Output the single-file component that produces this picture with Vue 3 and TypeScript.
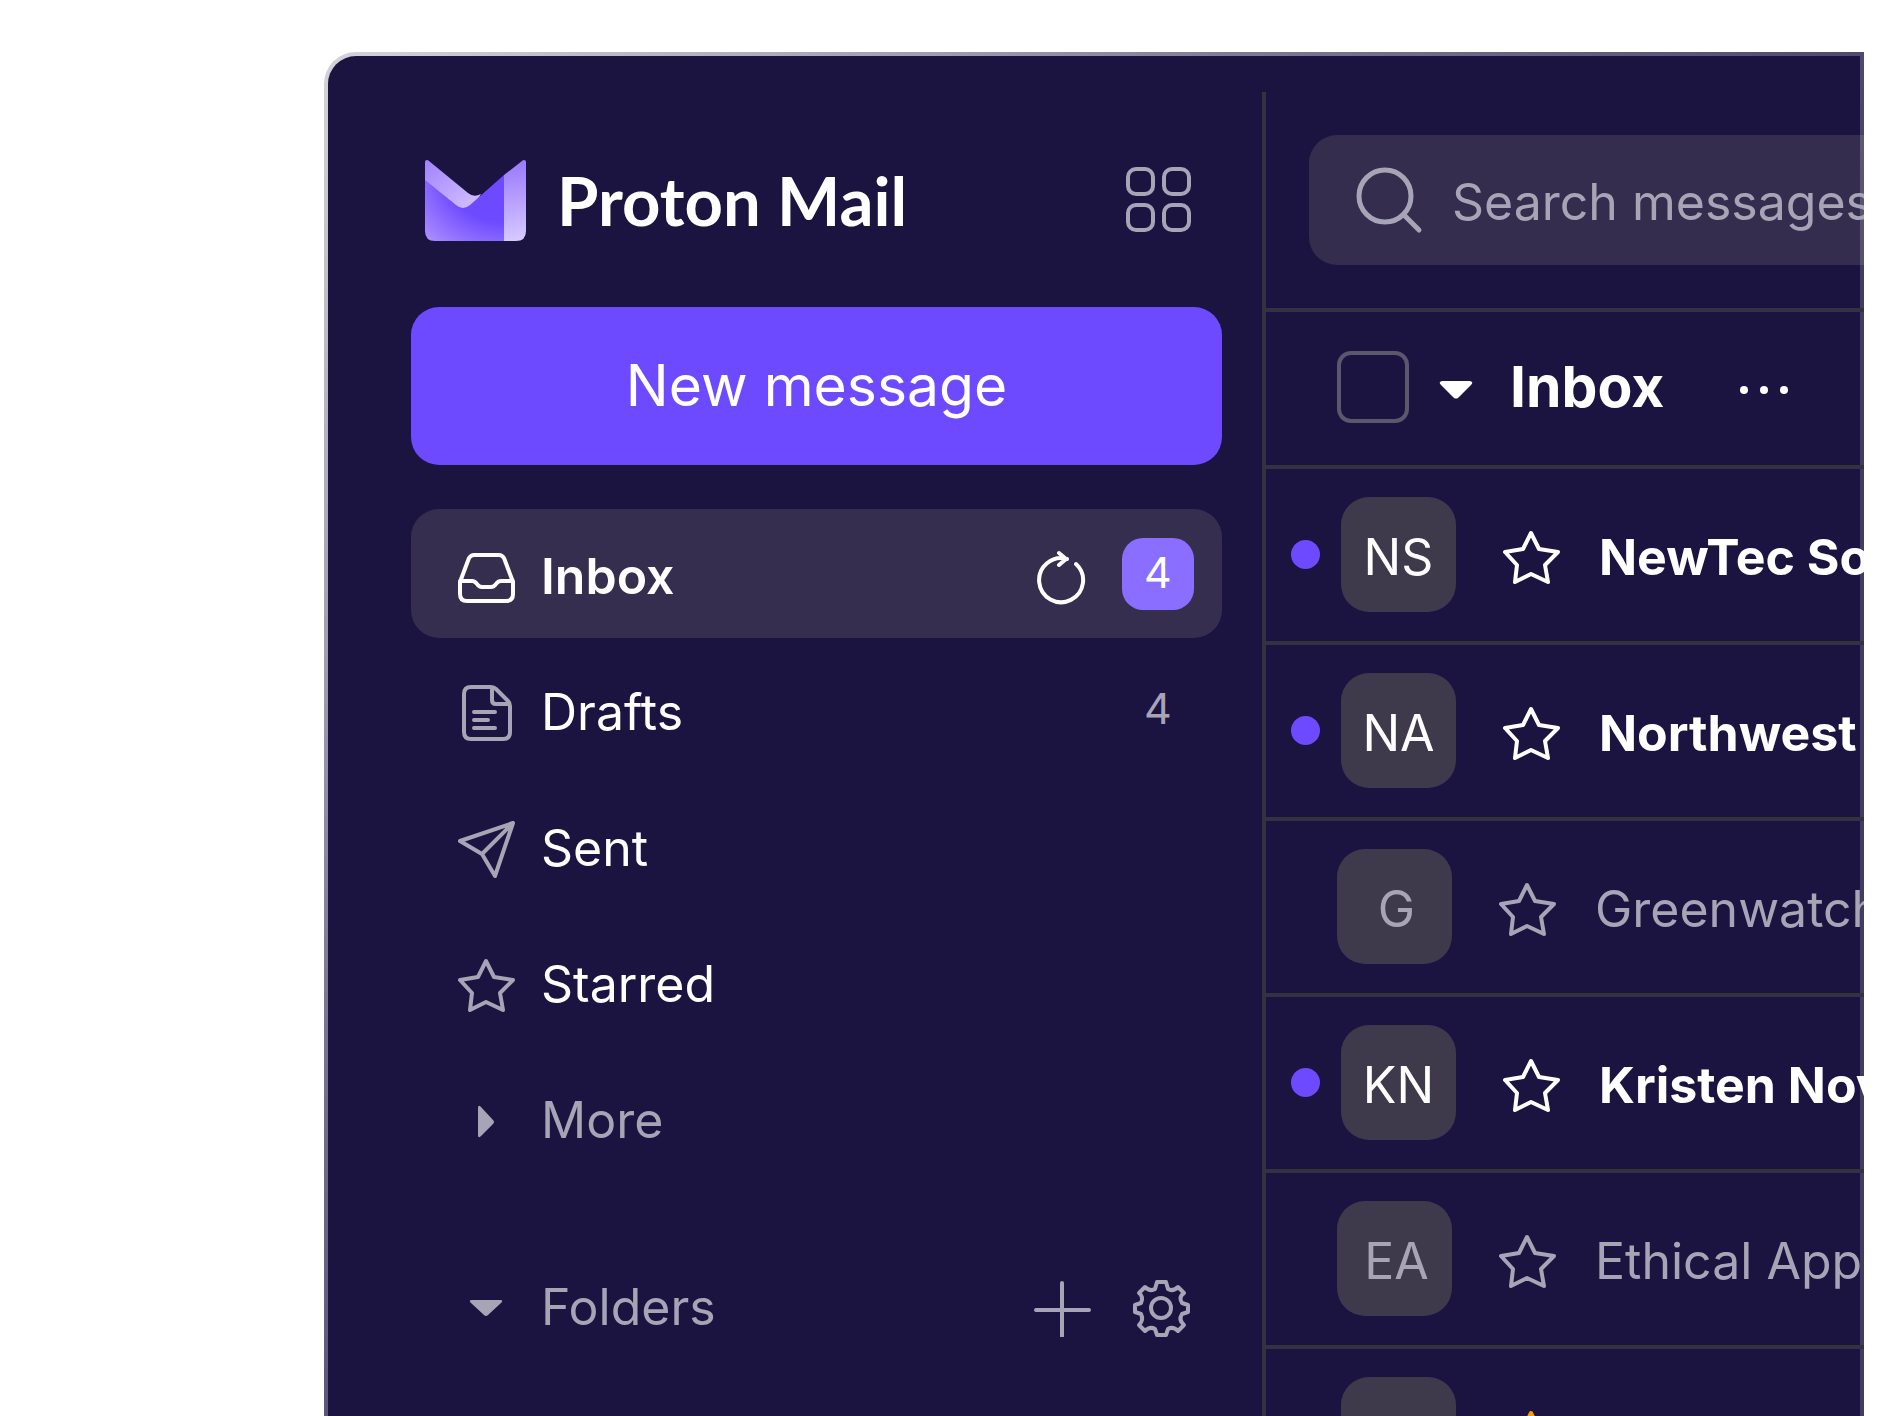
<script setup lang="ts">
interface Folder {
  name: string
  icon: 'inbox' | 'drafts' | 'sent' | 'star' | 'more'
  count?: number
  active?: boolean
  muted?: boolean
}

interface Mail {
  id: number
  initials: string
  sender: string
  unread: boolean
  starred?: boolean
}

const folders: Folder[] = [
  { name: 'Inbox', icon: 'inbox', count: 4, active: true },
  { name: 'Drafts', icon: 'drafts', count: 4 },
  { name: 'Sent', icon: 'sent' },
  { name: 'Starred', icon: 'star' },
  { name: 'More', icon: 'more', muted: true },
]

const mails: Mail[] = [
  { id: 1, initials: 'NS', sender: 'NewTec So', unread: true },
  { id: 2, initials: 'NA', sender: 'Northwest', unread: true },
  { id: 3, initials: 'G', sender: 'Greenwatch', unread: false },
  { id: 4, initials: 'KN', sender: 'Kristen Nov', unread: true },
  { id: 5, initials: 'EA', sender: 'Ethical App', unread: false },
  { id: 6, initials: '', sender: '', unread: true, starred: true },
]
</script>

<template>
  <div class="page">
    <div class="window">
      <aside class="sidebar">
        <header class="brand">
          <svg class="logo" viewBox="0 0 101 81" aria-hidden="true">
            <defs>
              <linearGradient id="flap" x1="0" y1="0" x2="50" y2="56" gradientUnits="userSpaceOnUse">
                <stop offset="0" stop-color="#a280ff" />
                <stop offset="1" stop-color="#d5c6ff" />
              </linearGradient>
              <radialGradient id="body" cx="0" cy="0" r="1" gradientUnits="userSpaceOnUse" gradientTransform="translate(78 8) scale(106 98)">
                <stop offset="0.55" stop-color="#6d4aff" />
                <stop offset="1" stop-color="#a98bff" />
              </radialGradient>
              <linearGradient id="side" x1="86" y1="5" x2="98" y2="81" gradientUnits="userSpaceOnUse">
                <stop offset="0" stop-color="#9c7cff" />
                <stop offset="1" stop-color="#d8caff" />
              </linearGradient>
            </defs>
            <path fill="url(#flap)" d="M0 2Q0 0 2 0Q3 0 4 1L43 33Q49 38 56 34L46 50H32L0 24Z" />
            <path fill="url(#body)" d="M0 20L31 45Q38 51 45 45L79 15V81H10Q0 81 0 71Z" />
            <path fill="url(#side)" d="M79 15L97 1Q98 0 99 0Q101 0 101 2V71Q101 81 91 81H79Z" />
          </svg>
          <span class="wordmark">Proton Mail</span>
          <button class="icon-button apps" aria-label="Apps">
            <svg viewBox="0 0 66 66" fill="none" stroke="currentColor" stroke-width="4">
              <rect x="2" y="2" width="25" height="25" rx="8" />
              <rect x="38" y="2" width="25" height="25" rx="8" />
              <rect x="2" y="38" width="25" height="25" rx="8" />
              <rect x="38" y="38" width="25" height="25" rx="8" />
            </svg>
          </button>
        </header>

        <button class="compose">New message</button>

        <nav class="folders" aria-label="Mailboxes">
          <a
            v-for="folder in folders"
            :key="folder.name"
            href="#"
            class="folder"
            :class="{ active: folder.active, muted: folder.muted }"
          >
            <svg v-if="folder.icon === 'inbox'" class="icon" viewBox="0 0 57 57" aria-hidden="true">
              <path d="M2 33L11 9Q13 6 16 6H41Q44 6 46 9L55 33V45Q55 52 48 52H9Q2 52 2 45ZM2 32H14Q17 32 19 35Q21 38 24 38H33Q36 38 38 35Q40 32 43 32H55" />
            </svg>
            <svg v-else-if="folder.icon === 'drafts'" class="icon" viewBox="0 0 57 57" aria-hidden="true">
              <path d="M13 2H33Q36 2 38 4L50 16Q52 18 52 21V47Q52 54 45 54H13Q6 54 6 47V9Q6 2 13 2ZM34 3V15Q34 19 38 19H51M16 27H37M16 35H30M16 43H37" />
            </svg>
            <svg v-else-if="folder.icon === 'sent'" class="icon" viewBox="0 0 57 57" aria-hidden="true">
              <path d="M2 20L55 2L37 55L24 33ZM24 33L54 3" />
            </svg>
            <svg v-else-if="folder.icon === 'star'" class="icon" viewBox="0 0 57 57" aria-hidden="true">
              <path d="M28 4L36 20L55 23L42 36L45 53L28 45L12 53L14 36L2 23L20 20Z" />
            </svg>
            <svg v-else class="icon solid" viewBox="0 0 57 57" aria-hidden="true">
              <path d="M20 15Q20 11 23 14L35 27Q37 29 35 31L23 43Q20 46 20 42Z" />
            </svg>
            <span class="folder-name">{{ folder.name }}</span>
            <svg v-if="folder.active" class="refresh" viewBox="0 0 57 57" aria-hidden="true">
              <path d="M43 15A22 22 0 1 1 34 10M26 4L33 10L26 16" />
            </svg>
            <span v-if="folder.count" class="count">{{ folder.count }}</span>
          </a>
        </nav>

        <div class="section">
          <svg class="icon solid" viewBox="0 0 57 57" aria-hidden="true">
            <path d="M14 20Q10 20 13 23L26 35Q28 37 30 35L43 23Q46 20 42 20Z" />
          </svg>
          <span class="folder-name">Folders</span>
          <button class="icon-button" aria-label="Add folder">
            <svg class="icon" viewBox="0 0 57 57"><path d="M28 3V56M2 30H55" /></svg>
          </button>
          <button class="icon-button" aria-label="Folder settings">
            <svg class="icon" viewBox="0 0 57 57">
              <circle cx="28" cy="28" r="10" />
              <path d="M24 2H33L35 9Q40 12 45 7L51 13Q45 17 49 23L55 25V32L49 34Q45 40 51 45L45 51Q40 46 35 49L33 55H24L22 49Q17 46 12 51L6 45Q11 40 8 34L2 32V25L8 23Q11 17 6 13L12 7Q17 12 22 9Z" />
            </svg>
          </button>
        </div>
      </aside>

      <main class="content">
        <div class="search-bar">
          <label class="search">
            <svg viewBox="0 0 68 68" fill="none" stroke="currentColor" stroke-width="5" stroke-linecap="round" aria-hidden="true">
              <circle cx="29" cy="30" r="26" />
              <path d="M48 49L63 64" />
            </svg>
            <input type="search" placeholder="Search messages" aria-label="Search messages" />
          </label>
        </div>

        <div class="toolbar">
          <input type="checkbox" class="select-all" aria-label="Select all" />
          <button class="icon-button caret" aria-label="Selection options">
            <svg viewBox="0 0 34 18"><path fill="currentColor" d="M3 0H31Q35 1 32 4L19 17Q17 18 15 17L2 4Q-1 1 3 0Z" /></svg>
          </button>
          <h1>Inbox</h1>
          <button class="icon-button dots" aria-label="More actions">
            <svg viewBox="0 0 50 10" fill="currentColor">
              <circle cx="5" cy="5" r="4" /><circle cx="25" cy="5" r="4" /><circle cx="45" cy="5" r="4" />
            </svg>
          </button>
        </div>

        <ul class="mails">
          <li v-for="mail in mails" :key="mail.id" class="mail" :class="{ unread: mail.unread }">
            <span v-if="mail.unread" class="dot"></span>
            <span class="avatar">{{ mail.initials }}</span>
            <svg class="icon" :class="{ starred: mail.starred }" viewBox="0 0 57 57" aria-hidden="true">
              <path d="M28 4L36 20L55 23L42 36L45 53L28 45L12 53L14 36L2 23L20 20Z" />
            </svg>
            <span class="sender">{{ mail.sender }}</span>
          </li>
        </ul>
      </main>
    </div>
  </div>
</template>

<style>
body {
  background: #fff;
}
</style>

<style scoped>
* {
  box-sizing: border-box;
}
.page {
  height: 100vh;
  overflow: hidden;
  padding: 52px 19px 0 324px;
  font-family: Inter, 'Liberation Sans', sans-serif;
  font-size: 50px;
  line-height: 60px;
  color: #fff;
}
.window {
  display: flex;
  height: 100%;
  padding-top: 36px;
  border: 4px solid transparent;
  border-bottom: 0;
  border-radius: 32px 0 0 0;
  background:
    linear-gradient(#1b1340, #1b1340) padding-box,
    linear-gradient(135deg, #d4d3dc, #a09cb1 21%, #777390 34%, #564f75 50%, #433c62 60%) border-box;
}
button {
  font: inherit;
  color: inherit;
  border: 0;
  padding: 0;
  background: none;
}
svg {
  display: block;
  flex: none;
}
.icon,
.refresh {
  width: 57px;
  height: 57px;
  fill: none;
  stroke: currentColor;
  stroke-width: 4px;
  stroke-linecap: round;
  stroke-linejoin: round;
}
.icon.solid {
  fill: currentColor;
  stroke: none;
}
.icon-button {
  color: #a7a4b5;
}

.sidebar {
  flex: none;
  width: 934px;
  padding: 60px 40px 0 83px;
}
.brand {
  display: flex;
  align-items: center;
  height: 100px;
  padding: 0 30px 4px 14px;
}
.logo {
  width: 101px;
  height: 81px;
}
.wordmark {
  margin-left: 31px;
  font-family: Lato, sans-serif;
  font-size: 67px;
  font-weight: 700;
  line-height: 80px;
}
.apps {
  margin-left: auto;
}
.apps svg {
  width: 66px;
  height: 66px;
}
.compose {
  display: block;
  width: 100%;
  height: 158px;
  margin-top: 55px;
  border-radius: 28px;
  background: #6d4aff;
  font-size: 57px;
}
.folders {
  display: flex;
  flex-direction: column;
  gap: 7px;
  margin-top: 44px;
}
.folder,
.section {
  display: flex;
  align-items: center;
  height: 129px;
  padding: 0 28px 0 47px;
  border-radius: 28px;
  color: #fff;
  text-decoration: none;
}
.folder .icon,
.refresh {
  margin-top: 8px;
}
.folder .icon,
.section > .icon {
  color: #a7a4b5;
}
.folder-name {
  flex: 1;
  margin-left: 26px;
  padding-top: 4px;
}
.folder.active {
  background: #352e4f;
  font-weight: 600;
}
.folder.active .icon {
  color: #fff;
}
.folder.muted,
.section {
  color: #a7a4b5;
}
.refresh {
  margin-right: 32px;
}
.count {
  width: 72px;
  height: 72px;
  border-radius: 21px;
  font-size: 43px;
  font-weight: 400;
  line-height: 68px;
  text-align: center;
  color: #a7a4b5;
}
.active .count {
  background: #8a6eff;
  color: #fff;
}
.section {
  margin-top: 58px;
  padding-right: 32px;
}
.section .icon {
  margin-top: 8px;
}
.section .icon-button + .icon-button {
  margin-left: 42px;
}

.content {
  flex: 1;
  min-width: 0;
  margin-right: -4px;
  overflow: hidden;
  border-left: 4px solid #343140;
}
.search-bar {
  height: 220px;
  padding: 43px 0 0 43px;
  border-bottom: 4px solid #343140;
}
.search {
  display: flex;
  align-items: center;
  height: 130px;
  padding-left: 47px;
  border-radius: 28px 0 0 28px;
  background: rgba(227, 227, 179, 0.13);
  color: #a7a4b5;
  overflow: hidden;
}
.search svg {
  width: 68px;
  height: 68px;
}
.search input {
  flex: none;
  width: 480px;
  margin-left: 28px;
  padding: 4px 0 0;
  border: 0;
  outline: 0;
  background: none;
  font: inherit;
  color: inherit;
}
.search input::placeholder {
  color: inherit;
  opacity: 1;
}
.toolbar {
  display: flex;
  align-items: center;
  height: 157px;
  padding: 0 0 4px 71px;
  border-bottom: 4px solid #343140;
}
.select-all {
  appearance: none;
  width: 72px;
  height: 72px;
  margin: 0;
  border: 4px solid #5c576d;
  border-radius: 14px;
}
.toolbar .icon-button {
  color: #fff;
}
.caret {
  margin: 6px 0 0 30px;
}
.caret svg {
  width: 34px;
  height: 18px;
}
h1 {
  margin: 0 0 0 37px;
  font-size: 57px;
  font-weight: 700;
}
.dots {
  margin: 6px 0 0 75px;
}
.dots svg {
  width: 50px;
  height: 10px;
}
.mails {
  margin: 0;
  padding: 0;
  list-style: none;
}
.mail {
  display: flex;
  align-items: center;
  height: 176px;
  padding: 0 0 2px 71px;
  border-bottom: 4px solid #343140;
  color: #a7a4b5;
  white-space: nowrap;
}
.mail.unread {
  padding-left: 25px;
  color: #fff;
}
.dot {
  flex: none;
  width: 29px;
  height: 29px;
  margin-right: 21px;
  border-radius: 50%;
  background: #6d4aff;
}
.avatar {
  flex: none;
  width: 115px;
  height: 115px;
  padding: 5px 0 0 4px;
  border-radius: 28px;
  background: #3f3a4b;
  line-height: 111px;
  text-align: center;
}
.unread .avatar {
  padding-left: 0;
}
.mail .icon {
  margin: 7px 0 0 47px;
}
.mail .starred {
  color: #ff9900;
  fill: currentColor;
}
.sender {
  margin-left: 39px;
  padding-top: 6px;
}
.unread .sender {
  font-weight: 700;
}
</style>
